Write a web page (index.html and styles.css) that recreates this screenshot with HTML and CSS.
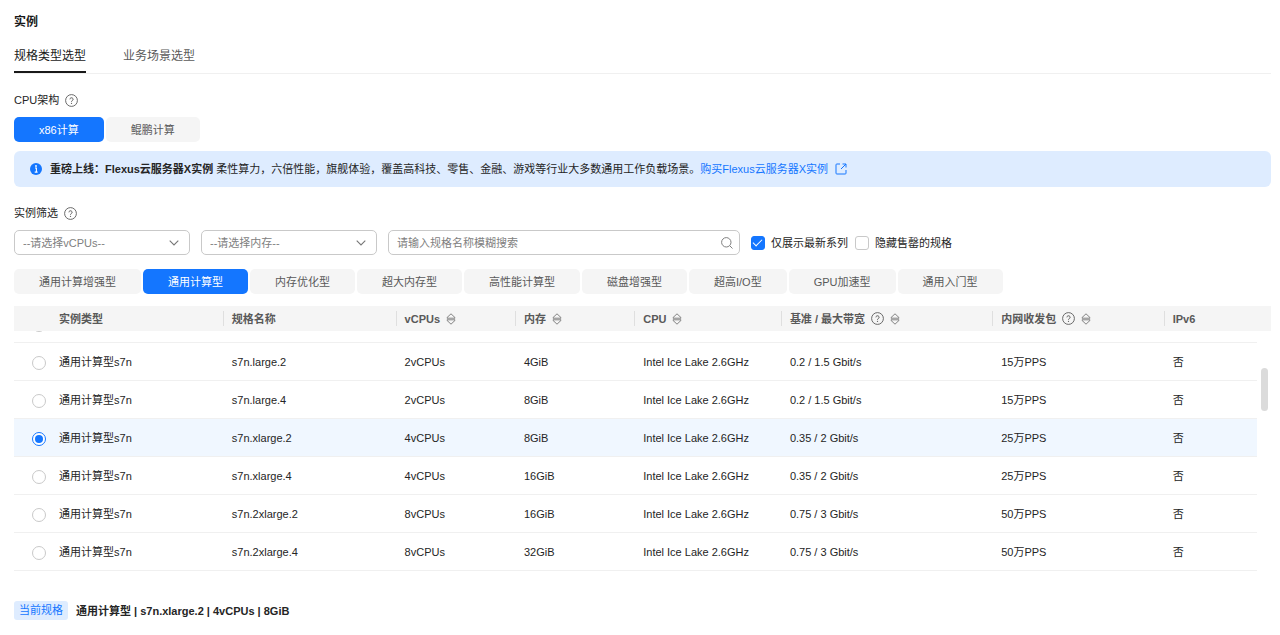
FILE: index.html
```
<!DOCTYPE html>
<html lang="zh-CN">
<head>
<meta charset="utf-8">
<title>实例</title>
<link rel="stylesheet" href="styles.css">
</head>
<body>
<svg class="sprite" aria-hidden="true">
  <symbol id="help" viewBox="0 0 13 13"><circle cx="6.5" cy="6.5" r="5.9" fill="none" stroke="currentColor" stroke-width=".9"/><path d="M4.9 5.3a1.6 1.5 0 1 1 2.4 1.3c-.6.3-.8.6-.8 1.1" fill="none" stroke="currentColor"/><circle cx="6.5" cy="9.3" r=".65" fill="currentColor"/></symbol>
  <symbol id="sort" viewBox="0 0 10 12"><path d="M5 .8 9 4.6v.6H1v-.6zM5 11.2 1 7.4v-.6h8v.6z" fill="none" stroke="currentColor" stroke-width=".9" stroke-linejoin="round"/></symbol>
  <symbol id="chevron" viewBox="0 0 10 6"><path d="M.7.7 5 5 9.3.7" fill="none" stroke="currentColor" stroke-width="1.1"/></symbol>
</svg>
<main class="page">
  <h1 class="title">实例</h1>
  <nav class="tabs">
    <a class="tab tab-active" href="#spec">规格类型选型</a>
    <a class="tab" href="#scene">业务场景选型</a>
  </nav>

  <h2 class="label">CPU架构 <svg class="help"><use href="#help"/></svg></h2>
  <div class="options">
    <button class="option option-active" type="button">x86计算</button>
    <button class="option" type="button">鲲鹏计算</button>
  </div>

  <div class="banner">
    <svg class="info" viewBox="0 0 12 12"><circle cx="6" cy="6" r="6" fill="#1476ff"/><path d="M5 5h1.4v4M4.7 9.1h2.9" fill="none" stroke="#fff" stroke-width="1.1"/><circle cx="6" cy="3" r=".9" fill="#fff"/></svg>
    <p class="banner-text"><strong>重磅上线：Flexus云服务器X实例</strong> 柔性算力，六倍性能，旗舰体验，覆盖高科技、零售、金融、游戏等行业大多数通用工作负载场景。</p>
    <a class="banner-link" href="#flexus">购买Flexus云服务器X实例
      <svg class="external" viewBox="0 0 12 12"><path d="M5 1H1.8Q1 1 1 1.8v8.4q0 .8.8.8h8.4q.8 0 .8-.8V7M7.5 1H11v3.5M11 1 6 6" fill="none" stroke="currentColor"/></svg></a>
  </div>

  <h2 class="label">实例筛选 <svg class="help"><use href="#help"/></svg></h2>
  <div class="filters">
    <div class="field">
      <select class="control" aria-label="vCPUs"><option>--请选择vCPUs--</option></select>
      <svg class="chevron"><use href="#chevron"/></svg>
    </div>
    <div class="field">
      <select class="control" aria-label="内存"><option>--请选择内存--</option></select>
      <svg class="chevron"><use href="#chevron"/></svg>
    </div>
    <div class="field field-search">
      <input class="control" type="text" placeholder="请输入规格名称模糊搜索" aria-label="规格名称">
      <svg class="search" viewBox="0 0 12 12"><circle cx="5.3" cy="5.3" r="4.7" fill="none" stroke="currentColor"/><path d="m8.7 8.7 2.8 2.8" stroke="currentColor"/></svg>
    </div>
    <div class="checks">
      <label class="check"><input class="box" type="checkbox" checked>仅展示最新系列</label>
      <label class="check"><input class="box" type="checkbox">隐藏售罄的规格</label>
    </div>
  </div>

  <div class="options options-types">
    <button class="option" type="button">通用计算增强型</button>
    <button class="option option-active" type="button">通用计算型</button>
    <button class="option" type="button">内存优化型</button>
    <button class="option" type="button">超大内存型</button>
    <button class="option" type="button">高性能计算型</button>
    <button class="option" type="button">磁盘增强型</button>
    <button class="option" type="button">超高I/O型</button>
    <button class="option" type="button">GPU加速型</button>
    <button class="option" type="button">通用入门型</button>
  </div>

  <div class="grid-head">
    <table class="grid">
      <colgroup><col class="c-radio"><col class="c-type"><col class="c-name"><col class="c-cpus"><col class="c-mem"><col class="c-cpu"><col class="c-band"><col class="c-pps"><col></colgroup>
      <thead>
        <tr>
          <td></td>
          <th><span class="head head-first">实例类型</span></th>
          <th><span class="head">规格名称</span></th>
          <th><span class="head">vCPUs <svg class="sort"><use href="#sort"/></svg></span></th>
          <th><span class="head">内存 <svg class="sort"><use href="#sort"/></svg></span></th>
          <th><span class="head">CPU <svg class="sort"><use href="#sort"/></svg></span></th>
          <th><span class="head">基准 / 最大带宽 <svg class="help"><use href="#help"/></svg><svg class="sort"><use href="#sort"/></svg></span></th>
          <th><span class="head">内网收发包 <svg class="help"><use href="#help"/></svg><svg class="sort"><use href="#sort"/></svg></span></th>
          <th><span class="head">IPv6</span></th>
        </tr>
      </thead>
    </table>
  </div>
  <div class="grid-body">
    <table class="grid">
      <colgroup><col class="c-radio"><col class="c-type"><col class="c-name"><col class="c-cpus"><col class="c-mem"><col class="c-cpu"><col class="c-band"><col class="c-pps"><col></colgroup>
      <tbody>
        <tr><td><input class="radio" type="radio" name="spec" aria-label="通用计算型s7n"></td><td></td><td></td><td></td><td></td><td></td><td></td><td></td><td></td></tr>
        <tr><td><input class="radio" type="radio" name="spec" aria-label="s7n.large.2"></td><td>通用计算型s7n</td><td>s7n.large.2</td><td>2vCPUs</td><td>4GiB</td><td>Intel Ice Lake 2.6GHz</td><td>0.2 / 1.5 Gbit/s</td><td>15万PPS</td><td>否</td></tr>
        <tr><td><input class="radio" type="radio" name="spec" aria-label="s7n.large.4"></td><td>通用计算型s7n</td><td>s7n.large.4</td><td>2vCPUs</td><td>8GiB</td><td>Intel Ice Lake 2.6GHz</td><td>0.2 / 1.5 Gbit/s</td><td>15万PPS</td><td>否</td></tr>
        <tr class="row-selected"><td><input class="radio" type="radio" name="spec" aria-label="s7n.xlarge.2" checked></td><td>通用计算型s7n</td><td>s7n.xlarge.2</td><td>4vCPUs</td><td>8GiB</td><td>Intel Ice Lake 2.6GHz</td><td>0.35 / 2 Gbit/s</td><td>25万PPS</td><td>否</td></tr>
        <tr><td><input class="radio" type="radio" name="spec" aria-label="s7n.xlarge.4"></td><td>通用计算型s7n</td><td>s7n.xlarge.4</td><td>4vCPUs</td><td>16GiB</td><td>Intel Ice Lake 2.6GHz</td><td>0.35 / 2 Gbit/s</td><td>25万PPS</td><td>否</td></tr>
        <tr><td><input class="radio" type="radio" name="spec" aria-label="s7n.2xlarge.2"></td><td>通用计算型s7n</td><td>s7n.2xlarge.2</td><td>8vCPUs</td><td>16GiB</td><td>Intel Ice Lake 2.6GHz</td><td>0.75 / 3 Gbit/s</td><td>50万PPS</td><td>否</td></tr>
        <tr><td><input class="radio" type="radio" name="spec" aria-label="s7n.2xlarge.4"></td><td>通用计算型s7n</td><td>s7n.2xlarge.4</td><td>8vCPUs</td><td>32GiB</td><td>Intel Ice Lake 2.6GHz</td><td>0.75 / 3 Gbit/s</td><td>50万PPS</td><td>否</td></tr>
      </tbody>
    </table>
    <div class="thumb"></div>
  </div>

  <footer class="current">
    <span class="tag">当前规格</span>
    <strong>通用计算型 | s7n.xlarge.2 | 4vCPUs | 8GiB</strong>
  </footer>
</main>
</body>
</html>
```
FILE: styles.css
```
* {
  box-sizing: border-box;
}

body {
  margin: 0;
  background: #fff;
  color: #252525;
  font: 11px/16px "Liberation Sans", "Noto Sans CJK SC", sans-serif;
}

.sprite {
  display: none;
}

.page {
  padding: 12px 9px 0 14px;
}

.title {
  margin: 0;
  font-size: 12px;
  line-height: 20px;
  color: #191919;
}

.tabs {
  display: flex;
  gap: 37px;
  margin-top: 14px;
  border-bottom: 1px solid #f0f0f0;
}

.tab {
  padding-bottom: 5px;
  border-bottom: 2px solid transparent;
  color: #595959;
  font-size: 12px;
  line-height: 20px;
  text-decoration: none;
}

.tab-active {
  border-color: #191919;
  color: #191919;
}

.label {
  display: flex;
  align-items: center;
  gap: 6px;
  margin: 18px 0 9px;
  font-size: 11px;
  font-weight: 400;
  line-height: 16px;
}

.help {
  flex: none;
  width: 13px;
  height: 13px;
  color: #595959;
}

.options {
  display: flex;
  gap: 2px;
}

.options-types {
  margin: 14px 0 12px;
}

.option {
  height: 25px;
  padding: 0 25px;
  border: 0;
  border-radius: 5px;
  background: #f5f5f5;
  color: #595959;
  font: inherit;
  white-space: nowrap;
}

.option-active {
  background: #1476ff;
  color: #fff;
}

.banner {
  display: flex;
  align-items: center;
  min-height: 36px;
  margin-top: 9px;
  padding: 0 16px;
  border-radius: 6px;
  background: #deecff;
}

.info {
  flex: none;
  width: 12px;
  height: 12px;
  margin-right: 8px;
}

.banner-text {
  margin: 0;
}

.banner-link {
  display: flex;
  align-items: center;
  gap: 7px;
  color: #1476ff;
  text-decoration: none;
  white-space: nowrap;
}

.external {
  width: 12px;
  height: 12px;
}

.filters {
  display: flex;
  gap: 11px;
}

.field {
  position: relative;
  width: 14%;
}

.field-search {
  width: 28%;
}

.control {
  display: block;
  width: 100%;
  height: 25px;
  padding: 0 28px 0 8px;
  border: 1px solid #c9c9c9;
  border-radius: 5px;
  background: #fff;
  color: #808080;
  font: inherit;
  appearance: none;
}

.control::placeholder {
  color: #808080;
}

.chevron {
  position: absolute;
  top: 10px;
  right: 11px;
  width: 10px;
  height: 6px;
  color: #777;
  pointer-events: none;
}

.search {
  position: absolute;
  top: 7px;
  right: 7px;
  width: 12px;
  height: 12px;
  color: #808080;
}

.checks {
  display: flex;
  gap: 7px;
}

.check {
  display: flex;
  align-items: center;
  gap: 6px;
}

.box {
  width: 14px;
  height: 14px;
  margin: 0;
  border: 1px solid #c9c9c9;
  border-radius: 3px;
  appearance: none;
}

.box:checked {
  display: grid;
  place-items: center;
  border-color: #1476ff;
  background: #1476ff;
}

.box:checked::before {
  content: "";
  width: 8px;
  height: 4px;
  margin-bottom: 3px;
  border: solid #fff;
  border-width: 0 0 1px 1px;
  transform: rotate(-45deg);
}

.grid-head {
  padding-right: 14px;
  background: #f5f5f5;
}

.grid {
  width: 100%;
  border-spacing: 0;
  table-layout: fixed;
}

.c-radio { width: 2.9%; }
.c-type { width: 13.9%; }
.c-name { width: 13.9%; }
.c-cpus { width: 9.6%; }
.c-mem { width: 9.6%; }
.c-cpu { width: 11.8%; }
.c-band { width: 17%; }
.c-pps { width: 13.8%; }

.grid th {
  height: 25px;
  padding: 0;
  color: #595959;
  text-align: left;
  white-space: nowrap;
}

.head {
  display: flex;
  align-items: center;
  gap: 6px;
  height: 15px;
  padding-left: 8px;
  border-left: 1px solid #dfdfdf;
}

.head-first {
  border-color: transparent;
}

.sort {
  width: 10px;
  height: 12px;
  color: #777;
}

.grid-body {
  position: relative;
  display: flex;
  align-items: flex-end;
  height: 240px;
  padding-right: 14px;
  overflow: hidden;
}

.grid tbody td {
  height: 38px;
  padding: 0 0 0 9px;
  border-bottom: 1px solid #f0f0f0;
}

.grid tbody td:first-child {
  padding: 2px 0 0 18px;
}

.row-selected {
  background: #f0f7ff;
}

.radio {
  display: grid;
  place-items: center;
  width: 14px;
  height: 14px;
  margin: 0;
  border: 1px solid #c9c9c9;
  border-radius: 50%;
  background: #fff;
  appearance: none;
}

.radio:checked {
  border-color: #1476ff;
}

.radio:checked::before {
  content: "";
  width: 8px;
  height: 8px;
  border-radius: 50%;
  background: #1476ff;
}

.thumb {
  position: absolute;
  top: 37px;
  right: 3px;
  width: 7px;
  height: 43px;
  border-radius: 4px;
  background: #dbdbdb;
}

.current {
  display: flex;
  align-items: center;
  gap: 8px;
  margin-top: 30px;
}

.tag {
  padding: 0 5px;
  border-radius: 3px;
  background: #deecff;
  color: #1476ff;
  line-height: 19px;
}
```
